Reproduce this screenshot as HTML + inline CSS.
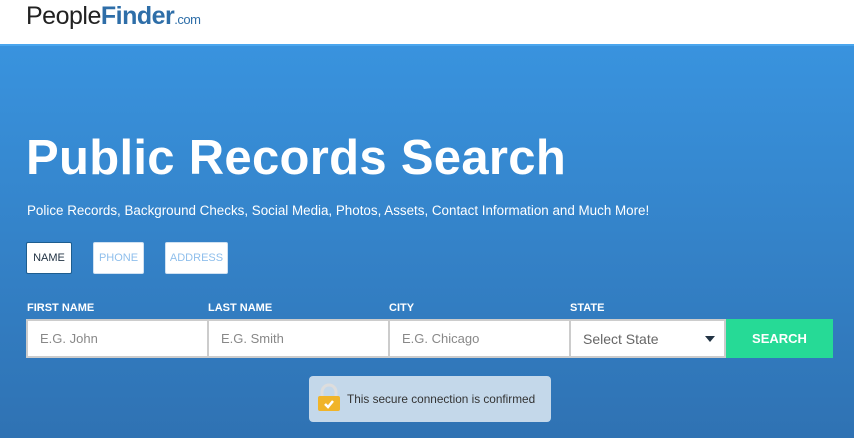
<!DOCTYPE html>
<html><head><meta charset="utf-8"><style>
*{margin:0;padding:0;box-sizing:border-box}
body{width:854px;height:438px;overflow:hidden;font-family:"Liberation Sans",sans-serif;background:#fff;position:relative}
.hdr{height:44px;background:#fff;position:relative}
.logo{position:absolute;left:26px;top:2px;font-size:25px;color:#222;letter-spacing:-0.5px}
.logo b{color:#2e6ea8}
.logo small{font-size:13px;color:#2e6ea8}
.hero{position:absolute;top:44px;left:0;width:854px;height:394px;background:linear-gradient(#3993de,#2f72b3);border-top:2px solid #4aa6ee}
.a{position:absolute;color:#fff}
h1{position:absolute;left:26px;top:84px;font-size:49px;font-weight:bold;color:#fff;letter-spacing:0.3px}
.sub{left:27px;top:157px;font-size:13.4px}
.tab{position:absolute;top:196px;height:32px;background:#fff;border:1px solid #cfe1f2;border-radius:2px;font-size:11px;color:#8fbfec;display:flex;align-items:center;justify-content:center}
.lbl{position:absolute;top:256px;font-size:11px;font-weight:bold;color:#fff}
.in{position:absolute;top:273px;height:39px;background:#fff;border:2px solid #ccc;font-size:13px;color:#888;padding-left:12px;display:flex;align-items:center}
.btn{position:absolute;left:726px;top:273px;width:107px;height:39px;background:#26da96;color:#fff;font-weight:bold;font-size:13px;display:flex;align-items:center;justify-content:center}
.sec{position:absolute;left:309px;top:330px;width:242px;height:46px;background:#c4d8ea;border-radius:4px;font-size:11.8px;color:#333;display:flex;align-items:center;padding-left:38px}
</style></head><body>
<div class="hdr"><div class="logo">People<b>Finder</b><small>.com</small></div></div>
<div class="hero">
<h1>Public Records Search</h1>
<div class="a sub">Police Records, Background Checks, Social Media, Photos, Assets, Contact Information and Much More!</div>
<div class="tab" style="left:26px;width:46px;color:#234;border-color:#1d5d8f">NAME</div>
<div class="tab" style="left:93px;width:51px">PHONE</div>
<div class="tab" style="left:165px;width:63px">ADDRESS</div>
<div class="lbl" style="left:27px">FIRST NAME</div>
<div class="lbl" style="left:208px">LAST NAME</div>
<div class="lbl" style="left:389px">CITY</div>
<div class="lbl" style="left:570px">STATE</div>
<div class="in" style="left:26px;width:183px">E.G. John</div>
<div class="in" style="left:207px;width:183px">E.G. Smith</div>
<div class="in" style="left:388px;width:183px">E.G. Chicago</div>
<div class="in" style="left:569px;width:157px;font-size:14px;color:#666">Select State<span style="position:absolute;right:9px;top:15px;border:5px solid transparent;border-top:6px solid #234;border-bottom:0"></span></div>
<div class="btn">SEARCH</div>
<div class="sec"><svg style="position:absolute;left:7px;top:6px" width="26" height="30" viewBox="0 0 26 30"><path d="M6 15V10a7 7 0 0 1 14 0v5" fill="none" stroke="#ddd" stroke-width="3"/><rect x="2" y="14" width="22" height="15" rx="2" fill="#f0b429"/><path d="M9 22l3 3 5-6" stroke="#fff" stroke-width="2.5" fill="none"/></svg>This secure connection is confirmed</div>
</div>
</body></html>
